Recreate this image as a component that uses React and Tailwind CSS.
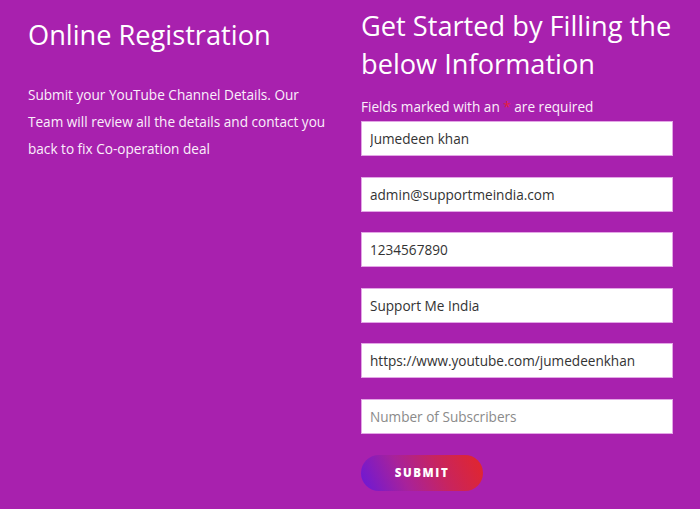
const fields = [
  { value: 'Jumedeen khan' },
  { value: 'admin@supportmeindia.com' },
  { value: '1234567890' },
  { value: 'Support Me India' },
  { value: 'https://www.youtube.com/jumedeenkhan' },
  { value: '', placeholder: 'Number of Subscribers' },
];

export default function App() {
  return (
    <div className="h-[509px] w-[700px] overflow-hidden bg-[#a821ae] font-['Open_Sans',sans-serif] text-white">
      <div className="flex">
        <div className="w-[361px] pl-[28px] pr-[30px] pt-[16px]">
          <h2 className="text-[27.2px] leading-[38px] font-normal">Online Registration</h2>
          <p className="mt-[27px] text-[13.6px] leading-[27px] text-[#fbeffb]">
            Submit your YouTube Channel Details. Our Team will review all the details and contact you back to fix Co-operation deal
          </p>
        </div>

        <div className="w-[318px] pt-[7px]">
          <h2 className="text-[27.2px] leading-[38px] font-normal">Get Started by Filling the below Information</h2>
          <form className="w-[312px]" onSubmit={(e) => e.preventDefault()}>
            <p className="mt-[14px] text-[13.6px] leading-[20px] text-[#fbeffb]">
              Fields marked with an <span className="text-[#e4203c]">*</span> are required
            </p>
            <div className="mt-[4px] flex flex-col gap-[20.5px]">
              {fields.map((f, i) => (
                <input
                  key={i}
                  defaultValue={f.value}
                  placeholder={f.placeholder}
                  className="h-[35px] w-full border border-[#e3a6e6] bg-white px-[8px] text-[13.6px] text-[#333] outline-none placeholder:text-[#8a8a8a]"
                />
              ))}
            </div>
            <button
              type="submit"
              className="mt-[21px] h-[36px] w-[122px] rounded-full bg-[linear-gradient(65deg,#6a18d8_0%,#a8229a_35%,#c8245e_65%,#e3262a_100%)] text-[11.5px] font-extrabold tracking-[1.6px] text-white"
            >
              SUBMIT
            </button>
          </form>
        </div>
      </div>
    </div>
  );
}
